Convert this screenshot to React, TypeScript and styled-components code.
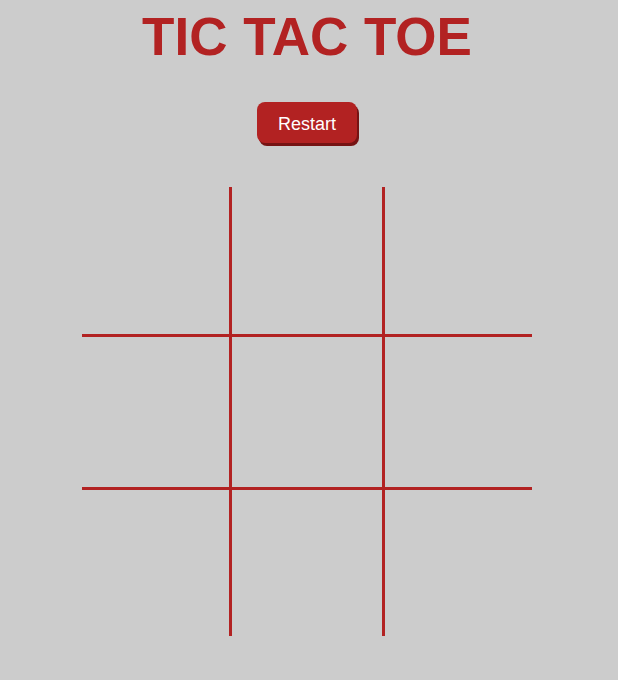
import React from "react";
import styled, { createGlobalStyle } from "styled-components";

const GlobalStyle = createGlobalStyle`
  html, body {
    margin: 0;
    padding: 0;
    background: #cccccc;
    font-family: "Liberation Sans", Arial, sans-serif;
  }
`;

const Page = styled.div`
  display: flex;
  flex-direction: column;
  align-items: center;
  width: 614px;
  padding-top: 7px;
`;

const Title = styled.h1`
  margin: 0;
  font-size: 53px;
  line-height: 60px;
  font-weight: 700;
  color: #b22222;
  word-spacing: 1px;
`;

const RestartButton = styled.button`
  margin-top: 35px;
  padding: 12px 21px 8px;
  border: none;
  border-radius: 8px;
  background: #b22222;
  color: #ffffff;
  font-family: "Liberation Sans", Arial, sans-serif;
  font-size: 18px;
  line-height: 21px;
  box-shadow: 2px 3px 0 #761313;
  cursor: pointer;
`;

const Board = styled.div`
  margin-top: 44px;
  display: grid;
  grid-template-columns: 147px 156px 147px;
  grid-template-rows: 147px 156px 146px;
`;

const Cell = styled.div<{ $col: number; $row: number }>`
  box-sizing: border-box;
  border-style: solid;
  border-color: #b22222;
  border-width: ${(p) => (p.$row === 1 ? "3px" : "0")}
    ${(p) => (p.$col === 1 ? "3px" : "0")}
    ${(p) => (p.$row === 1 ? "3px" : "0")}
    ${(p) => (p.$col === 1 ? "3px" : "0")};
`;

export default function App() {
  const cells = Array.from({ length: 9 }, (_, i) => i);
  return (
    <>
      <GlobalStyle />
      <Page>
        <Title>TIC TAC TOE</Title>
        <RestartButton>Restart</RestartButton>
        <Board>
          {cells.map((i) => (
            <Cell key={i} $row={Math.floor(i / 3)} $col={i % 3} />
          ))}
        </Board>
      </Page>
    </>
  );
}
